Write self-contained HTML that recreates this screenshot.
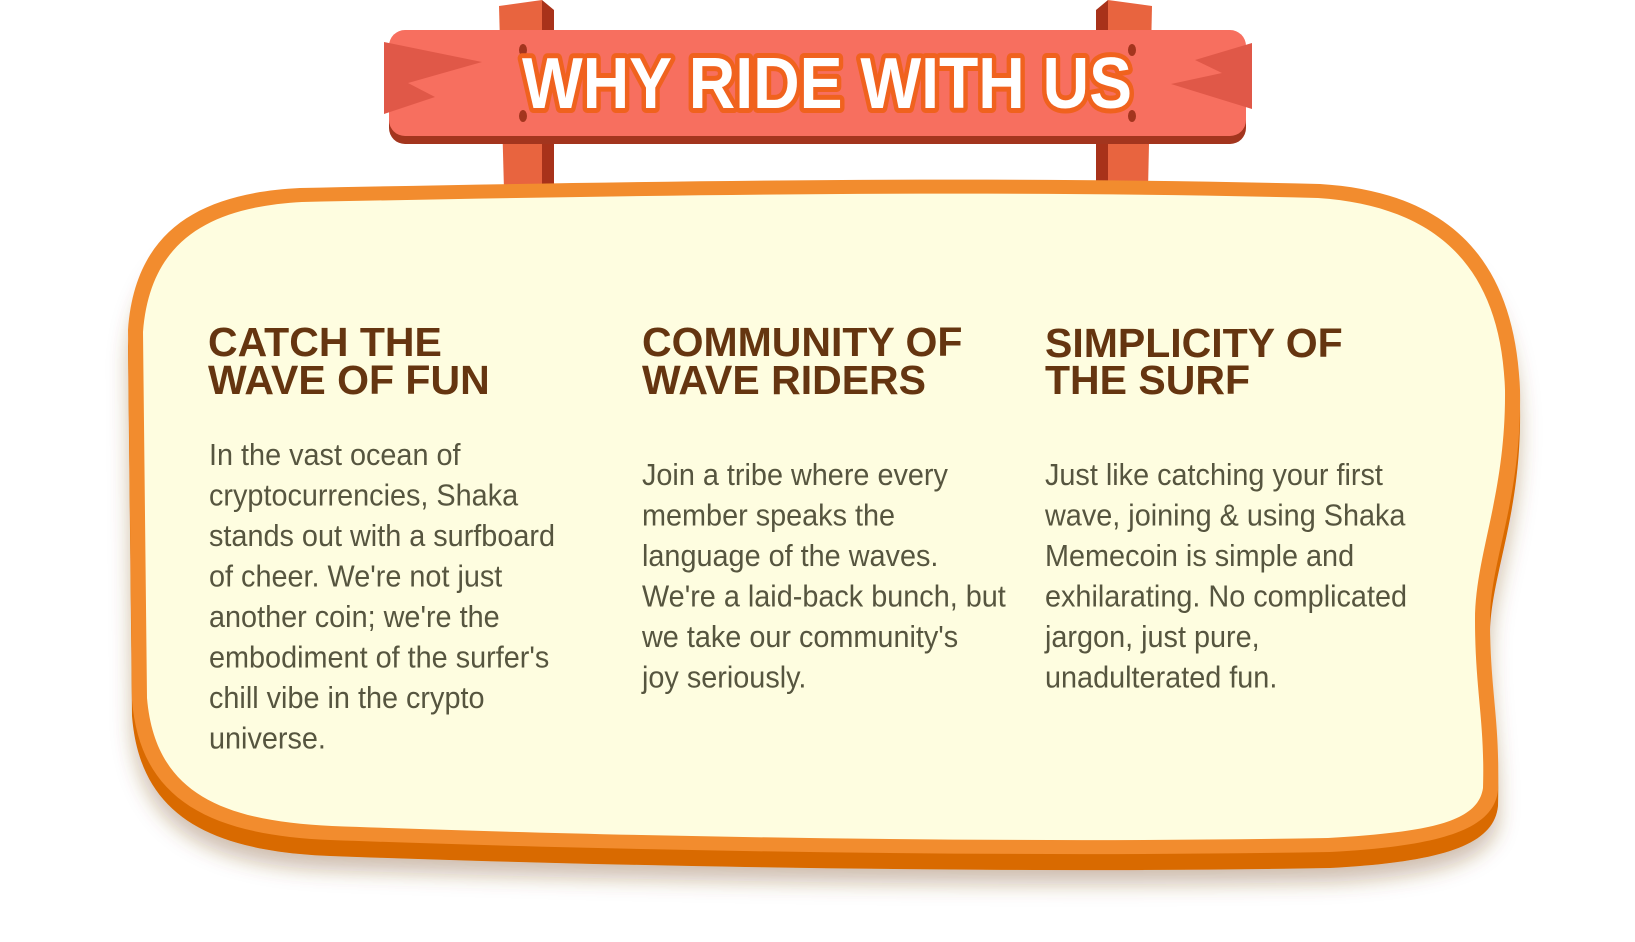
<!DOCTYPE html>
<html><head><meta charset="utf-8"><style>
html,body{margin:0;padding:0;background:#fff;width:1635px;height:942px;overflow:hidden}
svg{display:block}
.h{font-family:"Liberation Sans",sans-serif;font-weight:bold;font-size:41px;fill:#653510}
.b{font-family:"Liberation Sans",sans-serif;font-size:31px;fill:#56553f}
</style></head><body>
<svg width="1635" height="942" viewBox="0 0 1635 942" xmlns="http://www.w3.org/2000/svg">
<defs>
<filter id="sh" x="-10%" y="-10%" width="120%" height="130%">
<feDropShadow dx="0" dy="14" stdDeviation="10" flood-color="#7a4a1a" flood-opacity="0.35"/>
</filter>
</defs>
<polygon points="499,6 542,0 542,190 504,190" fill="#e8643f"/>
<polygon points="542,0 554,10 554,190 542,190" fill="#a8321a"/>
<polygon points="1108,0 1152,6 1148,190 1108,190" fill="#e8643f"/>
<polygon points="1096,10 1108,0 1108,190 1096,190" fill="#a8321a"/>
<rect x="389" y="36" width="857" height="108" rx="16" fill="#a3351e"/>
<rect x="389" y="30" width="857" height="106" rx="16" fill="#f76f5f"/>
<polygon points="384,42 482,62 408,83 435,97 384,114" fill="#e05848"/>
<polygon points="1252,43 1195,60 1222,73 1171,84 1252,109" fill="#e05848"/>
<ellipse cx="523" cy="50" rx="4" ry="6" fill="#a3351e"/>
<ellipse cx="523" cy="116" rx="4" ry="6" fill="#a3351e"/>
<ellipse cx="1132" cy="50" rx="4" ry="6" fill="#a3351e"/>
<ellipse cx="1132" cy="116" rx="4" ry="6" fill="#a3351e"/>
<text x="827" y="108" text-anchor="middle" textLength="610" lengthAdjust="spacingAndGlyphs" font-family="Liberation Sans,sans-serif" font-weight="bold" font-size="72" fill="#fff" stroke="#f0621e" stroke-width="10" stroke-linejoin="round" paint-order="stroke">WHY RIDE WITH US</text>
<g filter="url(#sh)">
<path transform="translate(0,16)" d="M300,188 C700,180 1000,176 1320,184 C1450,192 1515,260 1520,390 C1522,500 1490,560 1490,620 C1490,690 1500,720 1498,790 C1494,830 1440,846 1330,852 C1000,858 600,850 330,840 C210,835 140,800 132,700 L128,330 C135,230 200,193 300,188 Z" fill="#d96a00"/>
</g>
<path d="M300,188 C700,180 1000,176 1320,184 C1450,192 1515,260 1520,390 C1522,500 1490,560 1490,620 C1490,690 1500,720 1498,790 C1494,830 1440,846 1330,852 C1000,858 600,850 330,840 C210,835 140,800 132,700 L128,330 C135,230 200,193 300,188 Z" fill="#f28c2e"/>
<path d="M302,202 C700,194 1000,190 1318,198 C1436,206 1501,266 1505,390 C1506,495 1475,555 1475,620 C1475,690 1485,722 1483,788 C1478,822 1430,832 1328,838 C1000,844 600,836 332,826 C220,821 155,792 147,698 L143,332 C150,240 210,207 302,202 Z" fill="#fefde0"/>
<text class="h" x="208" y="356">CATCH THE</text>
<text class="h" x="208" y="394">WAVE OF FUN</text>
<text class="h" x="642" y="356">COMMUNITY OF</text>
<text class="h" x="642" y="394">WAVE RIDERS</text>
<text class="h" x="1045" y="357">SIMPLICITY OF</text>
<text class="h" x="1045" y="394">THE SURF</text>
<g transform="translate(209,0) scale(0.93,1)">
<text class="b" x="0" y="465">In the vast ocean of</text>
<text class="b" x="0" y="505.5">cryptocurrencies, Shaka</text>
<text class="b" x="0" y="546">stands out with a surfboard</text>
<text class="b" x="0" y="586.5">of cheer. We're not just</text>
<text class="b" x="0" y="627">another coin; we're the</text>
<text class="b" x="0" y="667.5">embodiment of the surfer's</text>
<text class="b" x="0" y="708">chill vibe in the crypto</text>
<text class="b" x="0" y="748.5">universe.</text>
</g>
<g transform="translate(642,0) scale(0.93,1)">
<text class="b" x="0" y="485">Join a tribe where every</text>
<text class="b" x="0" y="525.5">member speaks the</text>
<text class="b" x="0" y="566">language of the waves.</text>
<text class="b" x="0" y="606.5">We're a laid-back bunch, but</text>
<text class="b" x="0" y="647">we take our community's</text>
<text class="b" x="0" y="687.5">joy seriously.</text>
</g>
<g transform="translate(1045,0) scale(0.93,1)">
<text class="b" x="0" y="485">Just like catching your first</text>
<text class="b" x="0" y="525.5">wave, joining &amp; using Shaka</text>
<text class="b" x="0" y="566">Memecoin is simple and</text>
<text class="b" x="0" y="606.5">exhilarating. No complicated</text>
<text class="b" x="0" y="647">jargon, just pure,</text>
<text class="b" x="0" y="687.5">unadulterated fun.</text>
</g>
</svg>
</body></html>
